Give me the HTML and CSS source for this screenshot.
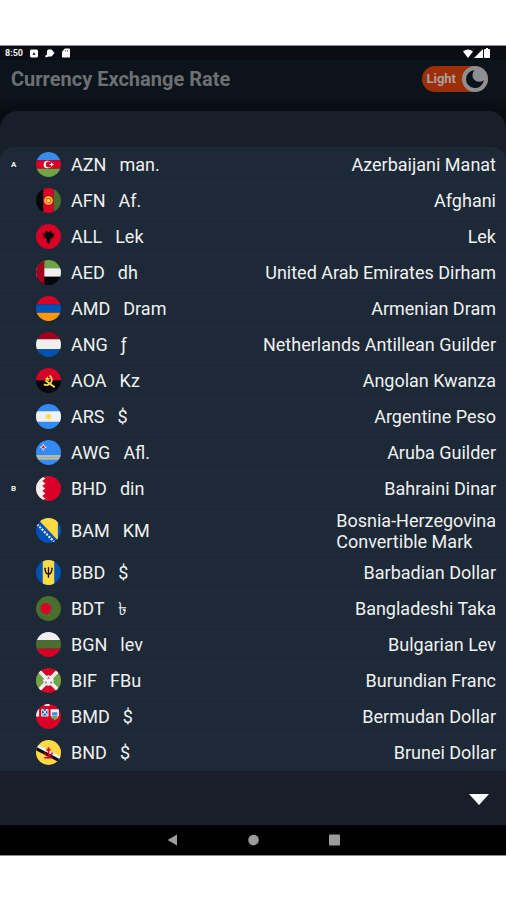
FILE: index.html
```html
<!DOCTYPE html>
<html lang="en">
<head>
<meta charset="utf-8">
<meta name="viewport" content="width=device-width, initial-scale=1">
<title>Currency Exchange Rate</title>
<link rel="stylesheet" href="styles.css">
</head>
<body>
<div class="device">
  <div class="status">
    <div class="status-left">
      <span class="clock">8:50</span>
      <svg width="8" height="9" viewBox="0 0 8 9"><rect y="0.5" width="8" height="8" rx="1.5" fill="#fff"/><path d="M4 3 5.500 6h-3z" fill="#222"/></svg>
      <svg width="10" height="9" viewBox="0 0 10 9"><path d="M3 .5h3.500L9.500 4 6.500 7.500H4L1 8.500 0 7l2-1.500V2z" fill="#fff"/></svg>
      <svg width="8" height="10" viewBox="0 0 8 10"><path d="M3 .5h4q1 0 1 1v7q0 1-1 1H1q-1 0-1-1V3.500z" fill="#fff"/><path d="M3.500 2v1.500M5.500 2v1.500" stroke="#555" stroke-width=".8"/></svg>
    </div>
    <div class="status-right">
      <svg width="10" height="9" viewBox="0 0 10 9"><path d="M0 2.500Q5-1.500 10 2.500L5 9z" fill="#fff"/></svg>
      <svg width="9" height="9" viewBox="0 0 9 9"><path d="M9 0v9H0z" fill="#fff"/></svg>
      <svg width="6" height="10" viewBox="0 0 6 10"><path d="M2 0h2v1h1q1 0 1 1v7q0 1-1 1H1Q0 10 0 9V2q0-1 1-1h1z" fill="#fff"/></svg>
    </div>
  </div>
  <header class="bar">
    <h1>Currency Exchange Rate</h1>
    <button class="theme" type="button">
      <span>Light</span>
      <svg width="26" height="26" viewBox="0 0 26 26"><circle cx="13" cy="13" r="13" fill="#8e8f92"/><path d="M12.500 4.300A8.900 8.900 0 1 0 21.800 14 5.600 5.600 0 0 1 12.500 4.300z" fill="#0b1118"/></svg>
    </button>
  </header>
  <main class="sheet">
    <ul class="list">
      <li><b>A</b><svg class="flag" viewBox="0 0 24 24"><path fill="#3b8beb" d="M0 0h24v8H0z"/><path fill="#d80027" d="M0 8h24v8H0z"/><path fill="#6da544" d="M0 16h24v8H0z"/><circle cx="11" cy="12" r="3.700" fill="#fff"/><circle cx="12.200" cy="12" r="2.800" fill="#d80027"/><path fill="#fff" d="m15 9.500.7 1.700 1.800.8-1.800.8-.7 1.700-.7-1.700-1.800-.8 1.800-.8z"/></svg><span>AZN</span><span class="sym">man.</span><span class="name">Azerbaijani Manat</span></li>
      <li><b></b><svg class="flag" viewBox="0 0 24 24"><path fill="#050608" d="M0 0h7v24H0z"/><path fill="#d80027" d="M7 0h10v24H7z"/><path fill="#496e2d" d="M17 0h7v24h-7z"/><circle cx="12" cy="12" r="3.500" fill="#e56b25" stroke="#ffda44" stroke-width="1.300"/><path d="M10.500 13.500v-2L12 10l1.500 1.500v2z" fill="#ffda44"/></svg><span>AFN</span><span class="sym">Af.</span><span class="name">Afghani</span></li>
      <li><b></b><svg class="flag" viewBox="0 0 24 24"><path fill="#d80027" d="M0 0h24v24H0z"/><path d="m12 8-2-1.500-1.500 1.300 1.300 1.400L5.500 9l2 1.500L6 12l2.500.2-1 2 2.500-.7.500 3.500L12 19.500l1.500-2.500.5-3.500 2.500.7-1-2L18 12l-1.500-1.500 2-1.500-4.300.2 1.300-1.400L14 6.500z" fill="#08090c"/></svg><span>ALL</span><span class="sym">Lek</span><span class="name">Lek</span></li>
      <li><b></b><svg class="flag" viewBox="0 0 24 24"><path fill="#6da544" d="M0 0h24v8H0z"/><path fill="#f0f0f0" d="M0 8h24v8H0z"/><path fill="#050608" d="M0 16h24v8H0z"/><path fill="#a2001d" d="M0 0h8v24H0z"/></svg><span>AED</span><span class="sym">dh</span><span class="name">United Arab Emirates Dirham</span></li>
      <li><b></b><svg class="flag" viewBox="0 0 24 24"><path fill="#d80027" d="M0 0h24v8H0z"/><path fill="#0052b4" d="M0 8h24v8H0z"/><path fill="#ff9811" d="M0 16h24v8H0z"/></svg><span>AMD</span><span class="sym">Dram</span><span class="name">Armenian Dram</span></li>
      <li><b></b><svg class="flag" viewBox="0 0 24 24"><path fill="#a2001d" d="M0 0h24v7H0z"/><path fill="#f0f0f0" d="M0 7h24v9.500H0z"/><path fill="#0052b4" d="M0 16.500h24V24H0z"/></svg><span>ANG</span><span class="sym">ƒ</span><span class="name">Netherlands Antillean Guilder</span></li>
      <li><b></b><svg class="flag" viewBox="0 0 24 24"><path fill="#d80027" d="M0 0h24v12H0z"/><path fill="#050608" d="M0 12h24v12H0z"/><path d="M13 7.300a4.800 4.800 0 1 1-5.500 8.200M9 12l9 6.500" fill="none" stroke="#ffda44" stroke-width="1.700"/><path d="m11 8 .7 1.700 1.800.1-1.400 1.200.4 1.700-1.500-.9-1.500.9.400-1.700L8.500 9.800l1.800-.1z" fill="#ffda44"/></svg><span>AOA</span><span class="sym">Kz</span><span class="name">Angolan Kwanza</span></li>
      <li><b></b><svg class="flag" viewBox="0 0 24 24"><path fill="#338af3" d="M0 0h24v24H0z"/><path fill="#f0f0f0" d="M0 7h24v10H0z"/><path fill="#ffda44" d="m12 8.800.9 1.400 1.600-.4-.4 1.500 1.300.7-1.300.8.400 1.500-1.600-.4-.9 1.400-.9-1.400-1.600.4.4-1.500-1.300-.8 1.300-.7-.4-1.500 1.600.4z"/></svg><span>ARS</span><span class="sym">$</span><span class="name">Argentine Peso</span></li>
      <li><b></b><svg class="flag" viewBox="0 0 24 24"><path fill="#338af3" d="M0 0h24v24H0z"/><path fill="#b9b8a0" d="M0 14.500h24v4.500H0z"/><path fill="#8fb0bd" d="M0 16.400h24v.8H0z"/><path fill="#d80027" stroke="#fff" stroke-width=".7" d="m7 4 .8 2.200L10 7l-2.200.8L7 10l-.8-2.200L4 7l2.200-.8z"/></svg><span>AWG</span><span class="sym">Afl.</span><span class="name">Aruba Guilder</span></li>
      <li><b>B</b><svg class="flag" viewBox="0 0 24 24"><path fill="#d80027" d="M0 0h24v24H0z"/><path fill="#f0f0f0" d="M0 0h6l3 2.500L6 4.800l3 2.400-3 2.400 3 2.400-3 2.400 3 2.400-3 2.400 3 2.300L6 24H0z"/></svg><span>BHD</span><span class="sym">din</span><span class="name">Bahraini Dinar</span></li>
      <li class="tall"><b></b><svg class="flag" viewBox="0 0 24 24"><path fill="#0052b4" d="M0 0h24v24H0z"/><path fill="#ffda44" d="M3 2.500V0h18v21.500z"/><path d="m1 6 17 17.500" stroke="#f0f0f0" stroke-width="2" stroke-dasharray="2 1.200"/></svg><span>BAM</span><span class="sym">KM</span><span class="name">Bosnia-Herzegovina<br>Convertible Mark</span></li>
      <li><b></b><svg class="flag" viewBox="0 0 24 24"><path fill="#0052b4" d="M0 0h24v24H0z"/><path fill="#ffda44" d="M6.500 0h11v24h-11z"/><path d="M12 7v10M8.500 8q.5 5.500 3.500 5.500T15.500 8M8 8h1.500m5 0H16" fill="none" stroke="#111" stroke-width="1.300"/></svg><span>BBD</span><span class="sym">$</span><span class="name">Barbadian Dollar</span></li>
      <li><b></b><svg class="flag" viewBox="0 0 24 24"><path fill="#496e2d" d="M0 0h24v24H0z"/><circle cx="9.500" cy="12" r="5.200" fill="#d80027"/></svg><span>BDT</span><span class="sym">৳</span><span class="name">Bangladeshi Taka</span></li>
      <li><b></b><svg class="flag" viewBox="0 0 24 24"><path fill="#f0f0f0" d="M0 0h24v8H0z"/><path fill="#496e2d" d="M0 8h24v8H0z"/><path fill="#d80027" d="M0 16h24v8H0z"/></svg><span>BGN</span><span class="sym">lev</span><span class="name">Bulgarian Lev</span></li>
      <li><b></b><svg class="flag" viewBox="0 0 24 24"><path fill="#d80027" d="M0 0h24v24H0z"/><path fill="#6da544" d="m0 0 12 12L0 24zM24 0 12 12l12 12z"/><path d="m2 2 20 20M22 2 2 22" stroke="#f0f0f0" stroke-width="3.500"/><circle cx="12" cy="12" r="5" fill="#f0f0f0"/><path d="m12 8 1.300 2.200h-2.600zM9.500 12.500l1.300 2.200H8.200zM14.500 12.500l1.300 2.200h-2.600z" fill="#e0506a"/></svg><span>BIF</span><span class="sym">FBu</span><span class="name">Burundian Franc</span></li>
      <li><b></b><svg class="flag" viewBox="0 0 24 24"><path fill="#d80027" d="M0 0h24v24H0z"/><path fill="#f0f0f0" d="M0 5h3v7H0zM8 0h5v2H8zM5 5h7v7H5zM14 5h8v6q-1 3-4 4-3-1-4-4z"/><path fill="#0052b4" d="M6 5h5v6H6z"/><path d="m6 11 5-6M6 5l5 6" stroke="#f0f0f0"/><path fill="#338af3" d="M15.500 8h5v3h-5z"/><path fill="#6da544" d="M15 11.500h6q-1 3-3 4-2-1-3-4z"/></svg><span>BMD</span><span class="sym">$</span><span class="name">Bermudan Dollar</span></li>
      <li><b></b><svg class="flag" viewBox="0 0 24 24"><path fill="#ffda44" d="M0 0h24v24H0z"/><path d="m-1 5 26 13.500" stroke="#f0f0f0" stroke-width="3.500"/><path d="m-1 7.700 26 13.500" stroke="#07080a" stroke-width="3"/><path d="M12 7v9M8.500 12q.5 3.500 3.500 3.500t3.500-3.500M10 9.500h4M8 17h8" fill="none" stroke="#d80027" stroke-width="1.500"/></svg><span>BND</span><span class="sym">$</span><span class="name">Brunei Dollar</span></li>
    </ul>
    <div class="more">
      <button type="button" aria-label="Show more"><svg width="20" height="11" viewBox="0 0 20 11"><path d="M0 0h20L10 11z" fill="#fff"/></svg></button>
    </div>
  </main>
  <nav class="nav">
    <button type="button" aria-label="Back"><svg width="11" height="12" viewBox="0 0 11 12"><path d="M10 .5v11L.5 6z" fill="#9c9c9c"/></svg></button>
    <button type="button" aria-label="Home"><svg width="11" height="12" viewBox="0 0 11 12"><circle cx="5.500" cy="6" r="5.300" fill="#9c9c9c"/></svg></button>
    <button type="button" aria-label="Recent apps"><svg width="11" height="12" viewBox="0 0 11 12"><rect y=".5" width="11" height="11" rx="1" fill="#9c9c9c"/></svg></button>
  </nav>
</div>
</body>
</html>
```
FILE: styles.css
```css
* {
  box-sizing: border-box;
}

body {
  margin: 0;
  padding: 45px 0;
  background: #fff;
  font-family: Roboto, "Liberation Sans", sans-serif;
  color: #f0f1f2;
}

button {
  padding: 0;
  border: 0;
  background: none;
  font: inherit;
  color: inherit;
}

svg {
  display: block;
  flex: none;
}

.device {
  border-top: 1px solid #8b8f92;
  border-bottom: 1px solid #8b8b8b;
  background: #090d13;
}

.status {
  display: flex;
  justify-content: space-between;
  align-items: center;
  height: 14px;
  padding: 0 16px 0 5px;
}

.status-left {
  display: flex;
  align-items: center;
  gap: 7px;
}

.status-right {
  display: flex;
  align-items: center;
  gap: 1px;
}

.clock {
  font-size: 9px;
  font-weight: 700;
  line-height: 14px;
}

.bar {
  display: flex;
  justify-content: space-between;
  align-items: center;
  height: 51px;
  padding: 0 18px 14px 11px;
  background: linear-gradient(#0c131a 70%, #090d13);
}

h1 {
  margin: 0;
  font-size: 20px;
  font-weight: 700;
  line-height: 24px;
  color: #6d7073;
}

.theme {
  display: flex;
  align-items: center;
  gap: 6px;
  padding-left: 4px;
  border-radius: 13px;
  background: #9c2f08;
  color: #a9a19e;
  font-size: 13px;
  font-weight: 700;
}

.sheet {
  border-radius: 18px 18px 0 0;
  padding-top: 36px;
  background: #191f2a;
}

.list {
  margin: 0;
  padding: 0;
  list-style: none;
  border-radius: 14px 14px 0 0;
  background: #1d2936;
}

.list li {
  display: flex;
  align-items: center;
  height: 36px;
  padding: 0 10px 0 11px;
  border-bottom: 1px solid #222e3b;
  font-size: 18px;
  line-height: 21px;
}

.list li:last-child {
  border-bottom-color: #1d2936;
}

.list .tall {
  height: 48px;
}

.list b {
  width: 25px;
  font-size: 8px;
}

.flag {
  width: 25px;
  height: 25px;
  margin-right: 10px;
  border-radius: 50%;
}

.sym {
  margin-left: 13px;
}

.name {
  margin-left: auto;
}

.more {
  display: flex;
  justify-content: flex-end;
  align-items: center;
  height: 54px;
  padding: 2px 17px 0 0;
}

.nav {
  display: flex;
  justify-content: center;
  align-items: center;
  gap: 70px;
  height: 30px;
  background: #000;
}
```
